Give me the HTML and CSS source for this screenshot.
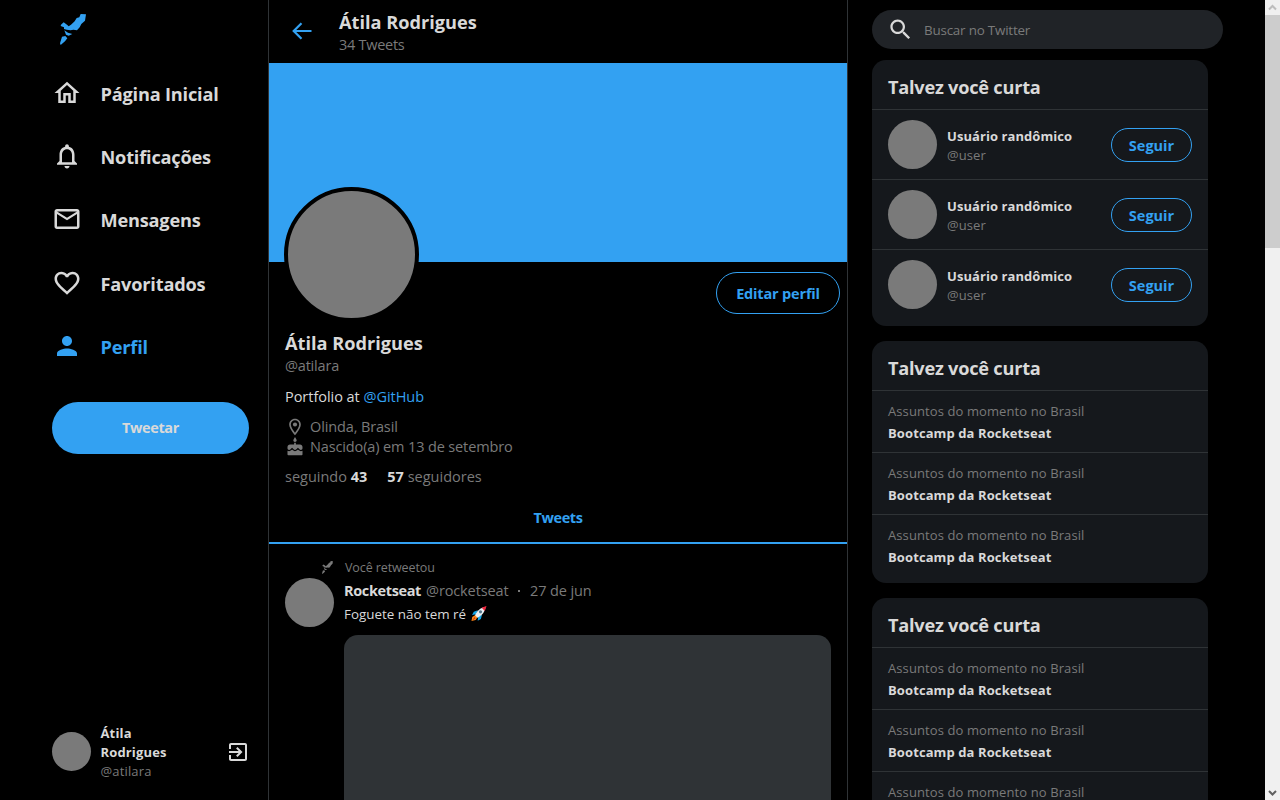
FILE: index.html
```html
<!DOCTYPE html>
<html lang="pt-BR">
<head>
<meta charset="utf-8">
<title>Átila Rodrigues</title>
<link rel="stylesheet" href="styles.css">
</head>
<body>
<svg class="defs" aria-hidden="true">
  <symbol id="rocket" viewBox="60 42 78 93"><path d="M122 42 138 43 135 62 124 72 119 82 111 91 100 89 92 91 80 89 72 87 72 82 62 78 63 74 71 67 81 74 86 79 93 74 104 64 110 54 118 52ZM73 91 84 98 97 102 86 107 78 104ZM66 110 76 108 82 115 75 124 62 135 60 130Z"/></symbol>
</svg>
<div class="app">
  <aside class="sidebar">
    <svg class="logo"><use href="#rocket"/></svg>
    <nav class="nav">
      <a class="nav-item"><svg viewBox="0 0 24 24"><path d="M12 5.69l5 4.5V18h-2v-6H9v6H7v-7.81l5-4.5M12 3L2 12h3v8h6v-6h2v6h6v-8h3L12 3z"/></svg><span>Página Inicial</span></a>
      <a class="nav-item"><svg viewBox="0 0 24 24"><path d="M12 22c1.1 0 2-.9 2-2h-4c0 1.1.9 2 2 2zm6-6v-5c0-3.07-1.63-5.64-4.5-6.32V4c0-.83-.67-1.5-1.5-1.5s-1.5.67-1.5 1.5v.68C7.64 5.36 6 7.92 6 11v5l-2 2v1h16v-1l-2-2zm-2 1H8v-6c0-2.48 1.51-4.5 4-4.5s4 2.02 4 4.5v6z"/></svg><span>Notificações</span></a>
      <a class="nav-item"><svg viewBox="0 0 24 24"><path d="M22 6c0-1.1-.9-2-2-2H4c-1.1 0-2 .9-2 2v12c0 1.1.9 2 2 2h16c1.1 0 2-.9 2-2V6zm-2 0l-8 5-8-5h16zm0 12H4V8l8 5 8-5v10z"/></svg><span>Mensagens</span></a>
      <a class="nav-item"><svg viewBox="0 0 24 24"><path d="M16.5 3c-1.74 0-3.41.81-4.5 2.09C10.91 3.81 9.24 3 7.5 3 4.42 3 2 5.42 2 8.5c0 3.78 3.4 6.86 8.55 11.54L12 21.35l1.45-1.32C18.6 15.36 22 12.28 22 8.5 22 5.42 19.58 3 16.5 3zm-4.4 15.55l-.1.1-.1-.1C7.14 14.24 4 11.39 4 8.5 4 6.5 5.5 5 7.5 5c1.54 0 3.04.99 3.57 2.36h1.87C13.46 5.99 14.96 5 16.5 5c2 0 3.5 1.5 3.5 3.5 0 2.89-3.14 5.74-7.9 10.05z"/></svg><span>Favoritados</span></a>
      <a class="nav-item active"><svg viewBox="0 0 24 24"><path d="M12 12c2.21 0 4-1.79 4-4s-1.79-4-4-4-4 1.79-4 4 1.79 4 4 4zm0 2c-2.67 0-8 1.34-8 4v2h16v-2c0-2.66-5.33-4-8-4z"/></svg><span>Perfil</span></a>
    </nav>
    <button class="tweet-button"><span>Tweetar</span></button>
    <div class="account">
      <div class="avatar small"></div>
      <div class="account-data"><strong>Átila</strong><strong>Rodrigues</strong><span>@atilara</span></div>
      <svg class="exit" viewBox="0 0 24 24"><path d="M10.09 15.59L11.5 17l5-5-5-5-1.41 1.41L12.67 11H3v2h9.67l-2.58 2.59zM19 3H5c-1.11 0-2 .9-2 2v4h2V5h14v14H5v-4H3v4c0 1.1.89 2 2 2h14c1.1 0 2-.9 2-2V5c0-1.1-.9-2-2-2z"/></svg>
    </div>
  </aside>

  <main class="main">
    <header class="header">
      <svg class="back" viewBox="0 0 20 18"><path d="M19.5 9H2M9.5 1.2 1.7 9l7.8 7.8"/></svg>
      <div class="header-data"><strong class="title">Átila Rodrigues</strong><span class="mid">34 Tweets</span></div>
    </header>
    <div class="banner"><div class="profile-avatar"></div></div>
    <section class="profile">
      <button class="edit"><span>Editar perfil</span></button>
      <h1 class="title">Átila Rodrigues</h1>
      <h2 class="handle mid">@atilara</h2>
      <p class="bio"><span>Portfolio at <a>@GitHub</a></span></p>
      <ul class="facts">
        <li><svg viewBox="0 0 24 24"><path d="M12 2C8.13 2 5 5.13 5 9c0 5.25 7 13 7 13s7-7.75 7-13c0-3.87-3.13-7-7-7zM7 9c0-2.76 2.24-5 5-5s5 2.24 5 5c0 2.88-2.88 7.19-5 9.88C9.92 16.21 7 11.85 7 9z"/><circle cx="12" cy="9" r="2.5"/></svg><span>Olinda, Brasil</span></li>
        <li><svg viewBox="0 0 24 24"><path d="M12 6c1.11 0 2-.9 2-2 0-.38-.1-.73-.29-1.03L12 0l-1.71 2.97c-.19.3-.29.65-.29 1.03 0 1.1.9 2 2 2zm4.6 9.99l-1.07-1.07-1.08 1.07c-1.3 1.3-3.58 1.31-4.89 0l-1.07-1.07-1.09 1.07C6.75 16.64 5.88 17 4.96 17c-.73 0-1.4-.23-1.96-.61V21c0 .55.45 1 1 1h16c.55 0 1-.45 1-1v-4.61c-.56.38-1.23.61-1.96.61-.92 0-1.79-.36-2.44-1.01zM18 9h-5V7h-2v2H6c-1.66 0-3 1.34-3 3v1.54c0 1.08.88 1.96 1.96 1.96.52 0 1.02-.2 1.38-.57l2.14-2.13 2.13 2.13c.74.74 2.03.74 2.77 0l2.14-2.13 2.13 2.13c.37.37.86.57 1.38.57 1.08 0 1.96-.88 1.96-1.96V12C21 10.34 19.66 9 18 9z"/></svg><span>Nascido(a) em 13 de setembro</span></li>
      </ul>
      <div class="follows"><span>seguindo <strong>43</strong></span><span><strong>57</strong> seguidores</span></div>
    </section>
    <div class="tab"><span>Tweets</span></div>
    <article class="tweet">
      <div class="retweeted"><svg><use href="#rocket"/></svg><span>Você retweetou</span></div>
      <div class="tweet-body">
        <div class="avatar"></div>
        <div class="content">
          <div class="meta"><strong>Rocketseat</strong><span>@rocketseat</span><i></i><time>27 de jun</time></div>
          <p class="text"><span>Foguete não tem ré</span>
            <svg viewBox="0 0 16 16"><path fill="#ff8a16" d="M4.5 9.2.8 11.8 0 16l4.4-1.2 2.4-3.4z"/><path fill="#c33b17" d="M3.6 11.4.2 15.8l4-2.4z"/><path fill="#15a7e8" d="M6.8 4.6 2.4 6.2.6 9.6l4.2-.8zM11.2 9.2 10 13.8l-3.4 2 .6-4.6z"/><path fill="#e9eef2" d="M3.8 9.8C5.6 5.8 9 1.8 15 .8c-.6 6-4.6 9.8-8.6 11.8z"/><path fill="#f0263e" d="M10.8 1.8 16 0l-1.8 5.2z"/><circle cx="9.6" cy="6.2" r="1.7" fill="#54758a"/></svg></p>
          <div class="media"></div>
        </div>
      </div>
    </article>
  </main>

  <aside class="widgets">
    <div class="search"><svg viewBox="0 0 24 24"><path d="M15.5 14h-.79l-.28-.27C15.41 12.59 16 11.11 16 9.5 16 5.91 13.09 3 9.5 3S3 5.91 3 9.5 5.91 16 9.5 16c1.61 0 3.09-.59 4.23-1.57l.27.28v.79l5 4.99L20.49 19l-4.99-5zm-6 0C7.01 14 5 11.99 5 9.5S7.01 5 9.5 5 14 7.01 14 9.5 11.99 14 9.5 14z"/></svg><span>Buscar no Twitter</span></div>
    <section class="card">
      <h3 class="title">Talvez você curta</h3>
      <div class="user"><div class="avatar"></div><div class="user-data"><strong>Usuário randômico</strong><span>@user</span></div><button class="follow"><span>Seguir</span></button></div>
      <div class="user"><div class="avatar"></div><div class="user-data"><strong>Usuário randômico</strong><span>@user</span></div><button class="follow"><span>Seguir</span></button></div>
      <div class="user"><div class="avatar"></div><div class="user-data"><strong>Usuário randômico</strong><span>@user</span></div><button class="follow"><span>Seguir</span></button></div>
    </section>
    <section class="card">
      <h3 class="title">Talvez você curta</h3>
      <div class="news"><span>Assuntos do momento no Brasil</span><strong>Bootcamp da Rocketseat</strong></div>
      <div class="news"><span>Assuntos do momento no Brasil</span><strong>Bootcamp da Rocketseat</strong></div>
      <div class="news"><span>Assuntos do momento no Brasil</span><strong>Bootcamp da Rocketseat</strong></div>
    </section>
    <section class="card">
      <h3 class="title">Talvez você curta</h3>
      <div class="news"><span>Assuntos do momento no Brasil</span><strong>Bootcamp da Rocketseat</strong></div>
      <div class="news"><span>Assuntos do momento no Brasil</span><strong>Bootcamp da Rocketseat</strong></div>
      <div class="news"><span>Assuntos do momento no Brasil</span><strong>Bootcamp da Rocketseat</strong></div>
    </section>
  </aside>

  <div class="scrollbar">
    <svg viewBox="0 0 15 15"><path stroke="#bdbdbd" d="M4 9.5 7.5 6 11 9.5"/></svg>
    <div class="thumb"></div>
    <svg viewBox="0 0 15 15"><path stroke="#606060" d="M4 6 7.5 9.5 11 6"/></svg>
  </div>
</div>
</body>
</html>
```
FILE: styles.css
```css
* { box-sizing: border-box; margin: 0; padding: 0; }
body { background: #000; color: #d9d9d9; font-family: "Open Sans", "Noto Sans", sans-serif; font-size: 14.5px; overflow: hidden; }
button { background: none; border: 0; font: inherit; }
svg { display: block; fill: currentColor; flex: none; }
span, strong, time { white-space: nowrap; }
.defs { width: 0; height: 0; position: absolute; }
.app { display: flex; height: 800px; overflow: hidden; }
.avatar { width: 49px; height: 49px; border-radius: 50%; background: #7a7a7a; flex: none; }
.title { font-size: 18.2px; font-weight: 700; line-height: 26px; }
.mid { color: #7a7a7a; font-size: 14.5px; font-weight: 400; line-height: 20px; letter-spacing: -0.2px; }

.sidebar { width: 268px; padding: 14px 19px 0 52px; display: flex; flex-direction: column; flex: none; }
.logo { width: 26px; height: 31px; margin-left: 8px; color: #33a1f2; }
.nav { margin-top: 17px; }
.nav-item { display: flex; align-items: center; height: 63.3px; gap: 18.5px; font-size: 18.2px; font-weight: 700; letter-spacing: -0.2px; }
.nav-item svg { width: 30px; height: 30px; margin-bottom: 2px; }
.nav-item.active { color: #33a1f2; }
.tweet-button { height: 52px; margin-top: 23.5px; border-radius: 26px; background: #33a1f2; color: #d9d9d9; font-weight: 700; font-size: 14.5px; letter-spacing: -0.4px; }
.account { margin-top: auto; height: 97px; padding-top: 20px; display: flex; }
.avatar.small { width: 39px; height: 39px; margin-top: 9px; }
.account-data { display: flex; flex-direction: column; margin: 1px 0 0 9.5px; font-size: 13px; line-height: 19px; letter-spacing: 0.15px; flex: 1; }
.account-data span { color: #7a7a7a; }
.exit { width: 24px; height: 24px; margin: 16.5px -0.5px 0 0; }

.main { width: 580px; border: solid #2f3336; border-width: 0 1px; flex: none; }
.header { height: 63px; display: flex; align-items: flex-start; padding: 10px 0 0 23px; color: #33a1f2; }
.back { width: 20px; height: 18px; margin-top: 12px; fill: none; stroke: currentColor; stroke-width: 2.2; }
.header-data { margin-left: 27px; display: flex; flex-direction: column; color: #d9d9d9; }
.header-data .title { line-height: 24px; }
.header-data .mid { line-height: 21px; letter-spacing: -0.28px; }
.banner { height: 199px; background: #33a1f2; padding: 124px 0 0 15px; }
.profile-avatar { width: 135px; height: 135px; border: 4px solid #000; border-radius: 50%; background: #7a7a7a; position: relative; }
.profile { padding: 10px 7px 0 16px; display: flex; flex-direction: column; height: 231px; }
.edit { align-self: flex-end; width: 124px; height: 42px; border: 1px solid #33a1f2; border-radius: 21px; color: #33a1f2; font-weight: 700; font-size: 14.5px; letter-spacing: -0.17px; flex: none; }
.profile h1 { margin-top: 16px; }
.handle { margin-top: 0; }
.bio { margin-top: 11px; line-height: 20px; letter-spacing: -0.04px; }
.bio a { color: #33a1f2; }
.facts { list-style: none; margin-top: 10px; color: #7a7a7a; letter-spacing: -0.13px; }
.facts li { display: flex; height: 20px; line-height: 20px; gap: 5px; }
.facts svg { width: 20px; height: 20px; }
.follows { display: flex; gap: 20px; margin-top: 10px; line-height: 20px; color: #7a7a7a; }
.follows strong { color: #d9d9d9; }
.tab { height: 51px; line-height: 50px; text-align: center; border-bottom: 2px solid #33a1f2; color: #33a1f2; font-weight: 700; font-size: 14.5px; letter-spacing: -0.4px; }
.tweet { padding: 14px 16px 0; }
.retweeted { display: flex; align-items: center; height: 18px; padding-left: 37px; gap: 12px; color: #7a7a7a; font-size: 12.5px; letter-spacing: -0.1px; }
.retweeted svg { width: 11px; height: 13px; }
.tweet-body { display: flex; gap: 10px; margin-top: 2px; }
.content { flex: 1; }
.meta { display: flex; align-items: center; height: 25px; color: #7a7a7a; letter-spacing: -0.1px; }
.meta strong { color: #d9d9d9; letter-spacing: -0.37px; }
.meta span { margin-left: 5px; letter-spacing: -0.12px; }
.meta i { width: 2px; height: 2px; background: #7a7a7a; margin: 0 10px 0 9.5px; }
.text { display: flex; align-items: center; height: 21px; gap: 5px; font-size: 13.4px; }
.text svg { width: 16px; height: 15px; }
.media { height: 279px; margin-top: 11px; border-radius: 14px; background: #2f3336; }

.widgets { width: 417px; padding: 10px 0 0 24px; flex: none; }
.search { width: 351px; height: 39px; border-radius: 19.5px; background: #202327; display: flex; align-items: center; padding-left: 15px; gap: 10px; font-size: 13.4px; letter-spacing: -0.2px; color: #7a7a7a; }
.search svg { width: 27px; height: 27px; color: #d9d9d9; }
.card { width: 336px; margin-top: 15px; padding-bottom: 7px; background: #15181c; border-radius: 14px; }
.search + .card { margin-top: 11px; }
.card .title { height: 49px; line-height: 54px; padding-left: 16px; letter-spacing: -0.24px; }
.user { height: 70px; border-top: 1px solid #2f3336; padding: 0 16px; display: flex; align-items: center; }
.user-data { margin: 2px 0 0 10px; flex: 1; display: flex; flex-direction: column; font-size: 13px; line-height: 19px; letter-spacing: 0.07px; }
.user-data span { color: #7a7a7a; }
.follow { width: 81px; height: 34px; padding-top: 1px; border: 1px solid #33a1f2; border-radius: 17px; color: #33a1f2; font-weight: 700; }
.news { height: 62px; border-top: 1px solid #2f3336; padding: 9px 16px 0; display: flex; flex-direction: column; font-size: 13px; line-height: 22px; letter-spacing: 0.1px; }
.news span { color: #7a7a7a; }

.scrollbar { width: 15px; background: #f0f0f0; display: flex; flex-direction: column; }
.scrollbar svg { width: 15px; height: 15px; fill: none; stroke-width: 2; }
.scrollbar .thumb { height: 233px; background: #cdcdcd; margin-bottom: auto; }
```
